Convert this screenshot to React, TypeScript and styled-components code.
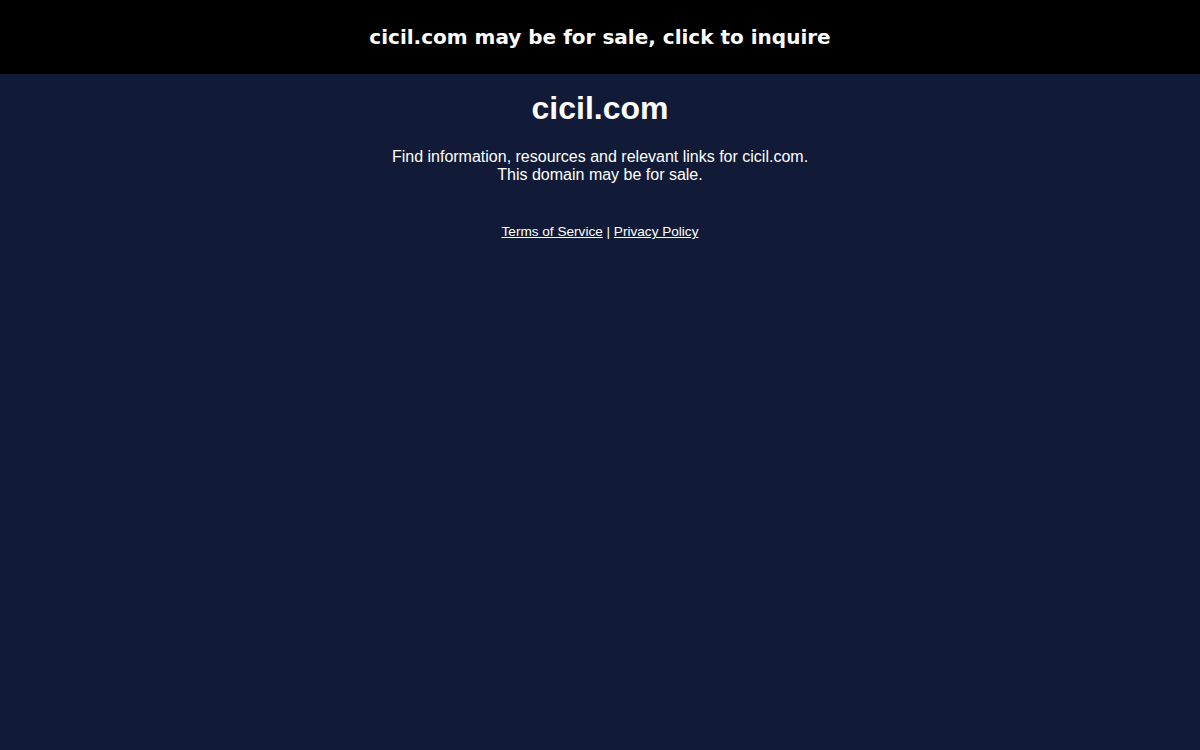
import React from 'react';
import styled, { createGlobalStyle } from 'styled-components';

const GlobalStyle = createGlobalStyle`
    html, body {
        margin: 0;
        padding: 0;
        background: #111b37;
    }
    body {
        font-family: "Liberation Sans", Arial, sans-serif;
        color: #ffffff;
    }
`;

const Page = styled.div`
    min-height: 750px;
    background: #111b37;
`;

const Banner = styled.a`
    display: flex;
    align-items: center;
    justify-content: center;
    height: 74px;
    background: #000000;
    color: #ffffff;
    text-decoration: none;
    font-family: "DejaVu Sans", sans-serif;
    font-weight: bold;
    font-size: 20px;
`;

const Content = styled.main`
    display: flex;
    flex-direction: column;
    align-items: center;
    text-align: center;
    padding-top: 16px;
`;

const Title = styled.h1`
    margin: 0;
    font-size: 32px;
    line-height: 37px;
    font-weight: bold;
`;

const Intro = styled.p`
    margin: 21px 0 0;
    font-size: 16px;
    line-height: 18px;
`;

const Footer = styled.div`
    margin-top: 40px;
    font-size: 13.6px;
    line-height: 15px;
`;

const Link = styled.a`
    color: #ffffff;
    text-decoration: underline;
`;

const App: React.FC = () => (
    <Page>
        <GlobalStyle />
        <Banner href="#">cicil.com may be for sale, click to inquire</Banner>
        <Content>
            <Title>cicil.com</Title>
            <Intro>
                Find information, resources and relevant links for cicil.com.
                <br />
                This domain may be for sale.
            </Intro>
            <Footer>
                <Link href="#">Terms of Service</Link> | <Link href="#">Privacy Policy</Link>
            </Footer>
        </Content>
    </Page>
);

export default App;
